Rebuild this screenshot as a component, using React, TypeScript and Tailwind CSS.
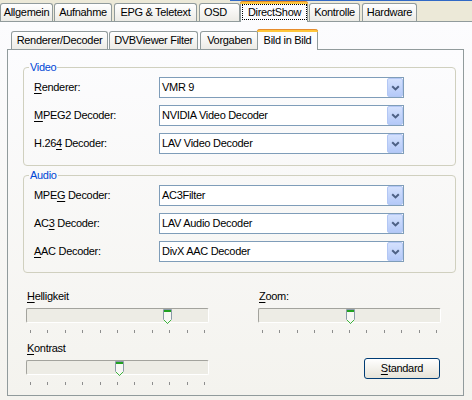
import React from "react";

function U({ children }: { children: React.ReactNode }) {
  return <span className="underline underline-offset-[2px]">{children}</span>;
}

function Tab({ cls, children }: { cls: string; children: React.ReactNode }) {
  return (
    <div
      className={`${cls} h-[18px] shrink-0 border border-b-0 border-[#919B9C] rounded-t-[3px] bg-gradient-to-b from-white to-[#ECEBE6] flex items-center whitespace-nowrap`}
    >
      {children}
    </div>
  );
}

function SelTab({ cls, focus, children }: { cls: string; focus?: boolean; children: React.ReactNode }) {
  return (
    <div
      className={`${cls} h-[21px] shrink-0 -mb-px relative z-10 flex flex-col bg-[#FCFCFE] border-x border-[#919B9C] rounded-t-[3px] whitespace-nowrap`}
    >
      <div className="h-[3px] -mx-px bg-[#FFC73C] border-t border-[#E68B2C] rounded-t-[3px]" />
      {focus ? (
        <div className="flex-1 flex pl-[1px] pb-[2px]">
          <div className="flex-1 border border-dotted border-black flex items-center justify-center">{children}</div>
        </div>
      ) : (
        <div className="flex-1 flex items-center justify-center pb-[2px]">{children}</div>
      )}
    </div>
  );
}

function Chevron() {
  return (
    <svg width="9" height="6" viewBox="0 0 9 6">
      <path d="M1.2 1.2L4.5 4.4L7.8 1.2" fill="none" stroke="#4D6185" strokeWidth="2" />
    </svg>
  );
}

function Combo({ value }: { value: string }) {
  return (
    <div className="w-[245px] h-[21px] border border-[#7F9DB9] bg-white flex items-stretch">
      <div className="flex-1 pl-[2px] flex items-center whitespace-nowrap">{value}</div>
      <div className="w-[16px] rounded-[2px] border border-[#B3C7F4] bg-gradient-to-b from-[#D4E1FD] to-[#B4C9F8] flex items-center justify-center">
        <Chevron />
      </div>
    </div>
  );
}

function Row({ label, value }: { label: React.ReactNode; value: string }) {
  return (
    <div className="flex items-center h-[21px]">
      <div className="w-[125px] whitespace-nowrap">{label}</div>
      <Combo value={value} />
    </div>
  );
}

function Group({ title, children, pb }: { title: string; children: React.ReactNode; pb: string }) {
  return (
    <fieldset className="w-[433px] min-w-0 m-0 p-0 border border-[#D0D0BF] rounded-[4px]">
      <legend className="ml-[5px] px-[1px] text-[#0046D5] leading-[13px]">{title}</legend>
      <div className={`pt-[3px] ${pb} pl-[10px] flex flex-col gap-[7px]`}>{children}</div>
    </fieldset>
  );
}

function Thumb() {
  return (
    <svg width="9" height="15" viewBox="0 0 9 15" shapeRendering="crispEdges">
      <path d="M0.5 0.5H8.5V10.5L4.5 14.5L0.5 10.5Z" fill="#F7F7F4" stroke="#8B9BA8" shapeRendering="auto" />
      <rect x="1" y="1" width="7" height="2" fill="#21A121" />
      <path d="M1 11L4.5 14.5L8 11" fill="none" stroke="#3CB43C" strokeWidth="1" shapeRendering="auto" />
    </svg>
  );
}

function Slider({ label, left }: { label: React.ReactNode; left: number }) {
  const ticks = Array.from({ length: 11 });
  return (
    <div className="flex flex-col">
      <div className="h-[13px] pl-[1px] whitespace-nowrap">{label}</div>
      <div className="relative mt-[5px] h-[15px] rounded-[2px] border-t border-l border-[#A3A39D] border-b border-r border-b-white border-r-white bg-[#EDECE5]">
        <div className="absolute top-0" style={{ left }}>
          <Thumb />
        </div>
      </div>
      <div className="mt-[7px] h-[4px] px-[4px] flex justify-between">
        {ticks.map((_, i) => (
          <div key={i} className="w-px h-[3px] bg-[#8E8E8E]" />
        ))}
      </div>
    </div>
  );
}

export default function App() {
  return (
    <div className="w-[472px] h-[400px] overflow-hidden bg-[#ECE9D8] text-[11px] leading-[13px] tracking-[-0.3px] text-black font-['Liberation_Sans',Arial,sans-serif] flex flex-col">
      <div className="h-px flex shrink-0">
        <div className="w-[230px]" />
        <div className="flex-1 bg-[#3169C6]" />
      </div>
      <div className="h-[20px] shrink-0 flex items-end">
        <Tab cls="w-[53px] justify-center">Allgemein</Tab>
        <Tab cls="ml-[1px] w-[58px] justify-center">Aufnahme</Tab>
        <Tab cls="ml-[2px] w-[83px] justify-center">EPG &amp; Teletext</Tab>
        <Tab cls="ml-[2px] w-[41px] pl-[4px]">OSD</Tab>
        <SelTab cls="w-[68px]" focus>
          DirectShow
        </SelTab>
        <Tab cls="ml-[1px] w-[51px] justify-center">Kontrolle</Tab>
        <Tab cls="ml-[2px] w-[55px] justify-center">Hardware</Tab>
      </div>
      <div className="flex-1 border-t border-[#919B9C] bg-gradient-to-b from-[#FCFCFE] to-[#F4F3EE] pt-[7px]">
        <div className="ml-[7px] w-[457px] flex flex-col">
          <div className="h-[20px] pl-[4px] flex items-end">
            <Tab cls="w-[97px] justify-center">Renderer/Decoder</Tab>
            <Tab cls="ml-[1px] w-[89px] justify-center">DVBViewer Filter</Tab>
            <Tab cls="ml-[2px] w-[59px] justify-center">Vorgaben</Tab>
            <SelTab cls="-ml-[2px] w-[61px]">Bild in Bild</SelTab>
          </div>
          <div className="h-[347px] border border-[#919B9C] bg-gradient-to-b from-[#FCFCFE] to-[#F4F3EE] flex flex-col">
            <div className="ml-[15px] mt-[11px] flex flex-col gap-[3px]">
              <Group title="Video" pb="pb-[11px]">
                <Row label={<><U>R</U>enderer:</>} value="VMR 9" />
                <Row label={<><U>M</U>PEG2 Decoder:</>} value="NVIDIA Video Decoder" />
                <Row label={<>H.26<U>4</U> Decoder:</>} value="LAV Video Decoder" />
              </Group>
              <Group title="Audio" pb="pb-[10px]">
                <Row label={<>MPE<U>G</U> Decoder:</>} value="AC3Filter" />
                <Row label={<>AC<U>3</U> Decoder:</>} value="LAV Audio Decoder" />
                <Row label={<><U>A</U>AC Decoder:</>} value="DivX AAC Decoder" />
              </Group>
            </div>
            <div className="ml-[18px] mt-[17px] grid grid-cols-[183px_183px] gap-x-[49px]">
              <div className="flex flex-col gap-[8px]">
                <Slider label={<><U>H</U>elligkeit</>} left={136} />
                <Slider label={<><U>K</U>ontrast</>} left={88} />
              </div>
              <div className="flex flex-col">
                <Slider label={<><U>Z</U>oom:</>} left={87} />
                <div className="mt-[24px] flex justify-end pr-[1px]">
                  <div className="w-[76px] h-[21px] rounded-[3px] border border-[#003C74] bg-gradient-to-b from-white to-[#E6E3D8] flex items-center justify-center">
                    <span>
                      <U>S</U>tandard
                    </span>
                  </div>
                </div>
              </div>
            </div>
          </div>
        </div>
      </div>
    </div>
  );
}
